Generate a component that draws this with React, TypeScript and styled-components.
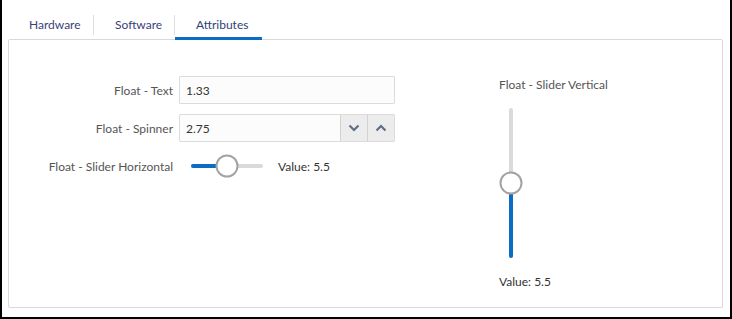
import React from "react";
import styled, { createGlobalStyle } from "styled-components";

const Global = createGlobalStyle`
  html, body { margin: 0; padding: 0; background: #fff; }
  body { font-family: Lato, "Open Sans", sans-serif; font-size: 12px; color: #333; }
  * { box-sizing: border-box; }
`;

const Frame = styled.div`
  width: 732px;
  height: 319px;
  border: 2px solid #000;
  border-top: 0;
  background: #fff;
  display: flex;
  flex-direction: column;
  padding: 12px 7px 9px 6px;
`;

const TabBar = styled.div`
  display: flex;
  align-items: stretch;
  height: 28px;
  position: relative;
  z-index: 1;
`;

const Tab = styled.div<{ $active?: boolean; $w: number }>`
  display: flex;
  align-items: center;
  width: ${(p) => p.$w}px;
  padding: 0 0 2px 21px;
  height: 28px;
  color: ${(p) => (p.$active ? "#2f3f78" : "#3b3f78")};
  box-shadow: ${(p) => (p.$active ? "inset 0 -3px 0 #0a6cc2" : "none")};
  line-height: 1;
`;

const Sep = styled.div`
  width: 1px;
  height: 20px;
  align-self: center;
  margin-top: -3px;
  background: #dedede;
`;

const Panel = styled.div`
  flex: 1;
  margin-top: -1px;
  border: 1px solid #d9d9d9;
  border-radius: 2px;
  display: flex;
`;

const Form = styled.div`
  display: grid;
  grid-template-columns: 164px 216px;
  grid-auto-rows: 28px;
  column-gap: 6px;
  row-gap: 10px;
  align-items: center;
  align-content: start;
  padding-top: 36px;
`;

const Label = styled.div`
  text-align: right;
  color: #555;
  white-space: nowrap;
`;

const InputBox = styled.div`
  height: 28px;
  border: 1px solid #dcdcdc;
  border-radius: 1px;
  background: #fcfcfc;
  display: flex;
  align-items: center;
  color: #333;
`;

const InputText = styled.div`
  flex: 1;
  padding-left: 6px;
`;

const SpinBtn = styled.div`
  width: 27px;
  height: 100%;
  background: #ececec;
  border-left: 1px solid #d2d2d2;
  display: flex;
  align-items: center;
  justify-content: center;
`;

const HSliderRow = styled.div`
  display: flex;
  align-items: center;
  padding-left: 12px;
  gap: 15px;
`;

const HTrack = styled.div`
  position: relative;
  width: 72px;
  height: 4px;
  border-radius: 2px;
  background: #dadada;
`;

const HFill = styled.div`
  position: absolute;
  left: 0;
  top: 0;
  bottom: 0;
  border-radius: 2px;
  background: #0a6cc2;
`;

const Thumb = styled.div`
  position: absolute;
  width: 23px;
  height: 23px;
  border-radius: 50%;
  border: 2px solid #a3a3a3;
  background: #fff;
  transform: translate(-50%, -50%);
`;

const ValueText = styled.div`
  color: #333;
  white-space: nowrap;
`;

const VSection = styled.div`
  margin-left: 104px;
  padding-top: 37px;
  display: flex;
  flex-direction: column;
`;

const VLabel = styled.div`
  color: #555;
  line-height: 16px;
`;

const VTrackWrap = styled.div`
  margin-top: 15px;
  padding-left: 10px;
  height: 150px;
`;

const VTrack = styled.div`
  position: relative;
  width: 4px;
  height: 150px;
  border-radius: 2px;
  background: #dadada;
`;

const VFill = styled.div`
  position: absolute;
  left: 0;
  right: 0;
  bottom: 0;
  border-radius: 2px;
  background: #0a6cc2;
`;

const VValue = styled.div`
  margin-top: 16px;
  line-height: 16px;
  color: #333;
`;

const Chevron = ({ up }: { up?: boolean }) => (
  <svg width="12" height="8" viewBox="0 0 12 8">
    <polyline
      points={up ? "1.5,6.5 6,2 10.5,6.5" : "1.5,1.5 6,6 10.5,1.5"}
      fill="none"
      stroke="#5e6f84"
      strokeWidth="2.2"
    />
  </svg>
);

export default function App() {
  const pct = 50;
  return (
    <>
      <Global />
      <Frame>
        <TabBar>
          <Tab $w={85}>Hardware</Tab>
          <Sep />
          <Tab $w={80}>Software</Tab>
          <Sep />
          <Tab $w={87} $active>
            Attributes
          </Tab>
        </TabBar>
        <Panel>
          <Form>
            <Label>Float - Text</Label>
            <InputBox>
              <InputText>1.33</InputText>
            </InputBox>
            <Label>Float - Spinner</Label>
            <InputBox>
              <InputText>2.75</InputText>
              <SpinBtn>
                <Chevron />
              </SpinBtn>
              <SpinBtn>
                <Chevron up />
              </SpinBtn>
            </InputBox>
            <Label>Float - Slider Horizontal</Label>
            <HSliderRow>
              <HTrack>
                <HFill style={{ width: `${pct}%` }} />
                <Thumb style={{ left: `${pct}%`, top: "50%" }} />
              </HTrack>
              <ValueText>Value: 5.5</ValueText>
            </HSliderRow>
          </Form>
          <VSection>
            <VLabel>Float - Slider Vertical</VLabel>
            <VTrackWrap>
              <VTrack>
                <VFill style={{ height: `${pct}%` }} />
                <Thumb style={{ left: "50%", top: `${100 - pct}%` }} />
              </VTrack>
            </VTrackWrap>
            <VValue>Value: 5.5</VValue>
          </VSection>
        </Panel>
      </Frame>
    </>
  );
}
